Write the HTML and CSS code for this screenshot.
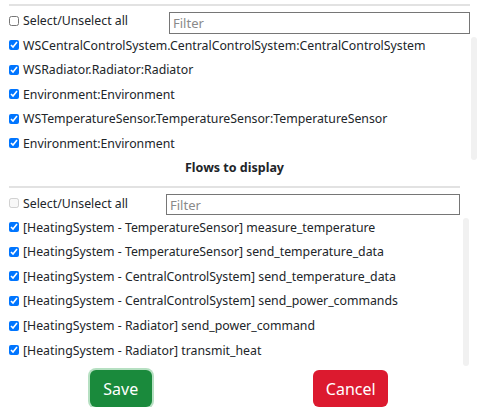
FILE: index.html
```html
<!DOCTYPE html>
<html>
<head>
<meta charset="utf-8">
<link rel="stylesheet" href="styles.css">
</head>
<body>
<div class="page">
  <section class="block block-actors">
    <hr class="rule">
    <div class="head">
      <label class="row-label"><input type="checkbox" class="cb"><span>Select/Unselect all</span></label>
      <input type="text" class="filter" placeholder="Filter">
    </div>
    <div class="list">
      <div class="items">
        <label class="row"><input type="checkbox" class="cb" checked><span>WSCentralControlSystem.CentralControlSystem:CentralControlSystem</span></label>
        <label class="row"><input type="checkbox" class="cb" checked><span>WSRadiator.Radiator:Radiator</span></label>
        <label class="row"><input type="checkbox" class="cb" checked><span>Environment:Environment</span></label>
        <label class="row"><input type="checkbox" class="cb" checked><span>WSTemperatureSensor.TemperatureSensor:TemperatureSensor</span></label>
        <label class="row"><input type="checkbox" class="cb" checked><span>Environment:Environment</span></label>
      </div>
      <div class="track"></div>
    </div>
  </section>
  <section class="block block-flows">
    <h3 class="title">Flows to display</h3>
    <hr class="rule">
    <div class="head">
      <label class="row-label"><input type="checkbox" class="cb" disabled><span>Select/Unselect all</span></label>
      <input type="text" class="filter" placeholder="Filter">
    </div>
    <div class="list">
      <div class="items">
        <label class="row"><input type="checkbox" class="cb" checked><span>[HeatingSystem - TemperatureSensor] measure_temperature</span></label>
        <label class="row"><input type="checkbox" class="cb" checked><span>[HeatingSystem - TemperatureSensor] send_temperature_data</span></label>
        <label class="row"><input type="checkbox" class="cb" checked><span>[HeatingSystem - CentralControlSystem] send_temperature_data</span></label>
        <label class="row"><input type="checkbox" class="cb" checked><span>[HeatingSystem - CentralControlSystem] send_power_commands</span></label>
        <label class="row"><input type="checkbox" class="cb" checked><span>[HeatingSystem - Radiator] send_power_command</span></label>
        <label class="row"><input type="checkbox" class="cb" checked><span>[HeatingSystem - Radiator] transmit_heat</span></label>
      </div>
      <div class="track"></div>
    </div>
    <div class="actions">
      <button class="btn btn-save">Save</button>
      <button class="btn btn-cancel">Cancel</button>
    </div>
  </section>
</div>
</body>
</html>
```

FILE: styles.css
```css
html, body {
  margin: 0;
  padding: 0;
  background: #ffffff;
}
body {
  font-family: "Noto Sans", "Open Sans", sans-serif;
  font-size: 12.3px;
  color: #212529;
  overflow: hidden;
}
.page {
  padding-left: 9px;
  padding-top: 4px;
}
.block-actors {
  width: 468px;
}
.block-flows {
  width: 460px;
}
.rule {
  margin: 0;
  border: 0;
  border-top: 2px solid #e2e2e2;
}
.block-actors .rule,
.block-actors .head {
  width: 461px;
}
.block-flows .rule,
.block-flows .head {
  width: 451px;
}
.head {
  display: flex;
  align-items: flex-start;
  justify-content: space-between;
  margin-top: 6px;
}
.block-actors .head .filter {
  width: 301px;
  height: 22px;
}
.block-flows .head .filter {
  width: 294px;
  height: 21px;
}
.filter {
  box-sizing: border-box;
  margin: 0;
  padding: 0 3px;
  border: 1px solid #767676;
  border-radius: 0;
  font-family: "Noto Sans", "Open Sans", sans-serif;
  font-size: 13px;
  color: #212529;
  outline: none;
}
.filter::placeholder {
  color: #8a8a8a;
}
.row-label {
  display: flex;
  align-items: center;
  height: 17px;
  white-space: nowrap;
}
.block-flows .row-label {
  height: 18px;
}
.row {
  display: flex;
  align-items: center;
  white-space: nowrap;
  box-sizing: border-box;
}
.cb {
  width: 10px;
  height: 10px;
  margin: 0 4px 0 0;
  flex: none;
}
.list {
  display: flex;
  justify-content: space-between;
  margin-top: 3px;
}
.items {
  display: flex;
  flex-direction: column;
}
.block-actors .list {
  height: 123px;
}
.block-flows .list {
  height: 148px;
}
.block-actors .row {
  height: 24.5px;
  padding-bottom: 8.5px;
}
.block-flows .row {
  height: 24.66px;
  padding-bottom: 6.66px;
}
.track {
  width: 6px;
  flex: none;
  background: #f1f1f1;
  border-radius: 3px;
}
.title {
  margin: 0;
  height: 26px;
  line-height: 16px;
  text-align: center;
  width: 451px;
  font-size: 12.5px;
  font-weight: 700;
  color: #212529;
}
.actions {
  display: flex;
  justify-content: space-around;
  padding-top: 4px;
}
.btn {
  height: 37px;
  border: 0;
  border-radius: 6px;
  padding: 0 12px;
  font-family: "Noto Sans", "Open Sans", sans-serif;
  font-size: 16px;
  color: #ffffff;
  cursor: pointer;
}
.btn-save {
  width: 62px;
  background: #1a8a3c;
  box-shadow: 0 0 0 2px #b6e0c2;
}
.btn-cancel {
  width: 75px;
  background: #dc1a2f;
}
```
